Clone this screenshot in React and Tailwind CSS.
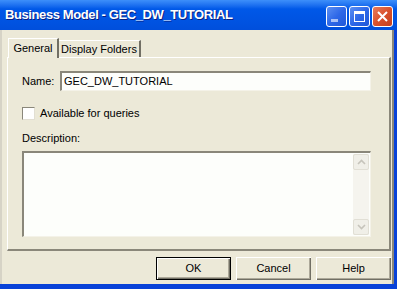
import React from 'react';

const font = "font-['Tahoma','Liberation_Sans',sans-serif]";

function CaptionButton({ kind }) {
  const base =
    'w-[21px] h-[21px] rounded-[3px] border border-white flex items-center justify-center';
  if (kind === 'close') {
    return (
      <div className={`${base} bg-gradient-to-br from-[#e77b5c] via-[#d9512c] to-[#c4401f]`}>
        <svg width="13" height="13" viewBox="0 0 13 13">
          <path d="M2 2 L11 11 M11 2 L2 11" stroke="white" strokeWidth="2" />
        </svg>
      </div>
    );
  }
  return (
    <div className={`${base} bg-gradient-to-br from-[#5c8ff2] via-[#2e68e8] to-[#2057d8]`}>
      {kind === 'min' ? (
        <div className="w-[7px] h-[3px] bg-white mt-[9px] mr-[4px] opacity-60" />
      ) : (
        <div className="w-[11px] h-[11px] border border-white border-t-[3px]" />
      )}
    </div>
  );
}

function Button({ label, isDefault }) {
  return (
    <div
      className={`w-[75px] h-[23px] flex items-center justify-center text-[11px] text-black ${
        isDefault
          ? 'border border-black shadow-[inset_1px_1px_#ffffff,inset_-1px_-1px_#716f64,inset_-2px_-2px_#aca899]'
          : 'shadow-[inset_1px_1px_#ffffff,inset_-1px_-1px_#716f64,inset_-2px_-2px_#aca899]'
      } bg-[#ece9d8]`}
    >
      {label}
    </div>
  );
}

export default function App() {
  return (
    <div className={`w-[397px] h-[289px] flex flex-col bg-[#0842d8] ${font}`}>
      {/* title bar */}
      <div className="h-[30px] flex items-center pl-[5px] pr-[4px] bg-gradient-to-b from-[#3d8ffa] via-[#0058e8] via-30% to-[#004fdc]">
        <span className="flex-1 text-white font-bold text-[13px] tracking-[-0.4px] [text-shadow:1px_1px_#0a2080] font-['Liberation_Sans',sans-serif]">
          Business Model - GEC_DW_TUTORIAL
        </span>
        <div className="flex gap-[2px] mt-[2px]">
          <CaptionButton kind="min" />
          <CaptionButton kind="max" />
          <CaptionButton kind="close" />
        </div>
      </div>

      {/* body */}
      <div className="flex-1 mb-[5px] mr-[3px] bg-[#ece9d8] border-l-2 border-l-[#d6d3c6] border-r-2 border-r-[#8a877a] flex flex-col pl-[5px] pr-[1px] pt-[7px]">
        {/* tabs */}
        <div className="flex items-end h-[20px] text-[11px]">
          <div className="h-[20px] w-[51px] ml-[1px] flex items-center justify-center bg-[#ece9d8] border-l border-t border-white border-r-2 border-r-[#716f64] relative -mb-px z-10">
            General
          </div>
          <div className="h-[17px] w-[82px] flex items-center justify-center bg-[#ece9d8] border-t border-white border-r-2 border-r-[#716f64]">
            Display Folders
          </div>
        </div>

        {/* panel */}
        <div className="h-[194px] border-l border-t border-white border-r-2 border-r-[#8a877a] border-b-2 border-b-[#8a877a] px-[14px] pt-[13px] text-[11px] text-black">
          <div className="flex items-center h-[20px]">
            <span className="w-[38px]">Name:</span>
            <div className="w-[311px] h-[20px] bg-[#fdfefb] border-t-2 border-l-2 border-[#8a877a] border-b border-r border-b-[#f4f2e8] border-r-[#f4f2e8] flex items-center pl-[2px]">
              GEC_DW_TUTORIAL
            </div>
          </div>

          <div className="flex items-center mt-[15px] h-[15px]">
            <div className="w-[13px] h-[13px] bg-white border border-[#8a877a] border-b-[#e2dfd3] border-r-[#e2dfd3]" />
            <span className="ml-[5px]">Available for queries</span>
          </div>

          <div className="mt-[10px] h-[14px] leading-[14px]">Description:</div>

          <div className="mt-[6px] w-[349px] h-[86px] bg-[#fdfefb] border-t-2 border-l-2 border-[#8a877a] border-b border-r border-b-[#f4f2e8] border-r-[#f4f2e8] flex justify-end pt-[1px] pr-[1px] pb-[1px]">
            <div className="w-[16px] flex flex-col bg-[#f5f4ee]">
              <div className="h-[16px] bg-[#f0efe8] border border-[#e1dfd5] rounded-[2px] flex items-center justify-center">
                <svg width="9" height="6" viewBox="0 0 9 6">
                  <path d="M1 5 L4.5 1.5 L8 5" stroke="#c6c4bb" strokeWidth="1.6" fill="none" />
                </svg>
              </div>
              <div className="flex-1" />
              <div className="h-[16px] bg-[#f0efe8] border border-[#e1dfd5] rounded-[2px] flex items-center justify-center">
                <svg width="9" height="6" viewBox="0 0 9 6">
                  <path d="M1 1 L4.5 4.5 L8 1" stroke="#c6c4bb" strokeWidth="1.6" fill="none" />
                </svg>
              </div>
            </div>
          </div>
        </div>

        {/* buttons */}
        <div className="flex justify-end gap-[5px] mt-[6px]">
          <Button label="OK" isDefault />
          <Button label="Cancel" />
          <Button label="Help" />
        </div>
      </div>
    </div>
  );
}
